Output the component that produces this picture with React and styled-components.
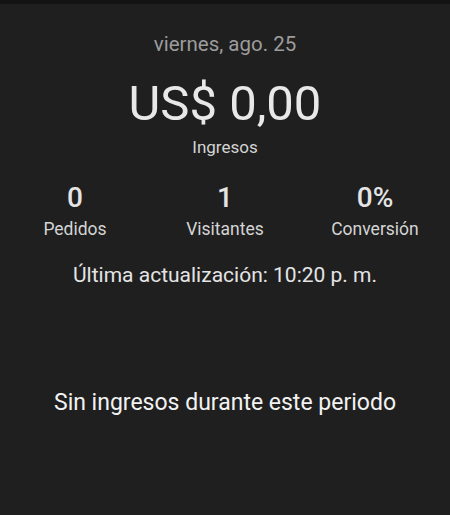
import React from "react";
import styled, { createGlobalStyle } from "styled-components";

const Global = createGlobalStyle`
  html, body { margin: 0; padding: 0; background: #1f1f1f; }
  body { font-family: Roboto, "Noto Sans", sans-serif; }
`;

const Screen = styled.div`
  width: 450px;
  height: 515px;
  background: #1f1f1f;
  display: flex;
  flex-direction: column;
  overflow: hidden;
`;

const TopBar = styled.div`
  height: 4px;
  background: #131313;
  flex: none;
`;

const Summary = styled.section`
  display: flex;
  flex-direction: column;
  align-items: center;
  padding-top: 28px;
`;

const DateText = styled.div`
  font-size: 20.5px;
  line-height: 24px;
  color: #9c9c9c;
`;

const Amount = styled.div`
  margin-top: 20px;
  font-size: 49px;
  line-height: 56px;
  color: #e8e8e8;
`;

const Caption = styled.div`
  margin-top: 5px;
  font-size: 17px;
  line-height: 20px;
  color: #d4d4d4;
`;

const Stats = styled.div`
  align-self: stretch;
  display: grid;
  grid-template-columns: repeat(3, 1fr);
  margin-top: 25px;
`;

const Stat = styled.div`
  display: flex;
  flex-direction: column;
  align-items: center;
  gap: 5px;
`;

const StatValue = styled.div`
  font-size: 28px;
  line-height: 32px;
  font-weight: 500;
  color: #e4e4e4;
`;

const StatLabel = styled.div`
  font-size: 17.5px;
  line-height: 20px;
  color: #d4d4d4;
`;

const Updated = styled.div`
  margin-top: 24px;
  font-size: 21px;
  line-height: 24px;
  color: #e4e4e4;
`;

const Empty = styled.div`
  margin-top: 103px;
  text-align: center;
  font-size: 23px;
  line-height: 26px;
  color: #f2f2f2;
`;

const stats = [
  { value: "0", label: "Pedidos" },
  { value: "1", label: "Visitantes" },
  { value: "0%", label: "Conversión" },
];

export default function App() {
  return (
    <Screen>
      <Global />
      <TopBar />
      <Summary>
        <DateText>viernes, ago. 25</DateText>
        <Amount>US$ 0,00</Amount>
        <Caption>Ingresos</Caption>
        <Stats>
          {stats.map((s) => (
            <Stat key={s.label}>
              <StatValue>{s.value}</StatValue>
              <StatLabel>{s.label}</StatLabel>
            </Stat>
          ))}
        </Stats>
        <Updated>Última actualización: 10:20 p. m.</Updated>
      </Summary>
      <Empty>Sin ingresos durante este periodo</Empty>
    </Screen>
  );
}
